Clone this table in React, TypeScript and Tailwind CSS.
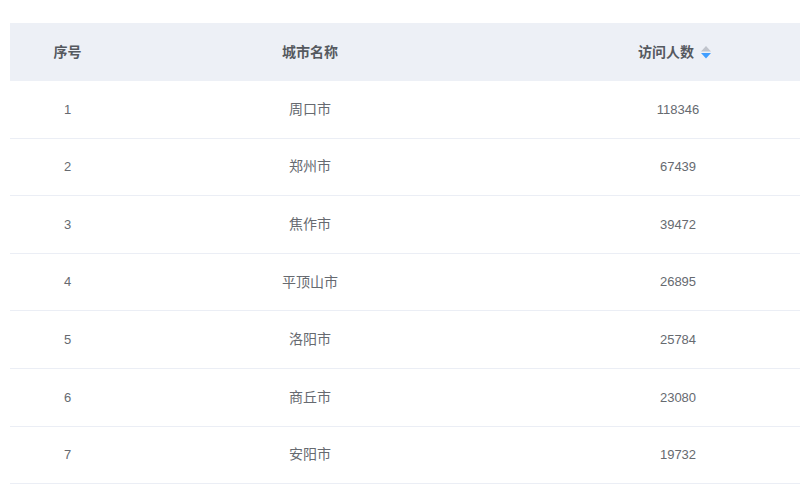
import React from 'react'

const rows = [
  { id: 1, city: '周口市', visits: 118346 },
  { id: 2, city: '郑州市', visits: 67439 },
  { id: 3, city: '焦作市', visits: 39472 },
  { id: 4, city: '平顶山市', visits: 26895 },
  { id: 5, city: '洛阳市', visits: 25784 },
  { id: 6, city: '商丘市', visits: 23080 },
  { id: 7, city: '安阳市', visits: 19732 },
]

// 排序图标：上灰下蓝
function SortIcon() {
  return (
    <span className="inline-flex w-[24px] h-[14px] items-center">
      <svg width="24" height="14" viewBox="0 0 24 14">
        <path d="M12 1 L17 6.5 L7 6.5 Z" fill="#c0c4cc" />
        <path d="M7 8 L17 8 L12 13.5 Z" fill="#409eff" />
      </svg>
    </span>
  )
}

export default function App() {
  return (
    <div
      className="w-[800px] h-[486px] overflow-hidden bg-white pl-[10px] pt-[23px]"
      style={{ fontFamily: '"Liberation Sans", "Noto Sans CJK SC", sans-serif' }}
    >
      <div className="w-[851px]">
        {/* 表头 */}
        <div className="flex h-[58px] items-center bg-[#edf0f6] text-[14px] font-bold text-[#55595f]">
          <div className="w-[115px] text-center">序号</div>
          <div className="w-[370px] text-center">城市名称</div>
          <div className="w-[366px] flex items-center justify-center">
            访问人数
            <SortIcon />
          </div>
        </div>
        {/* 数据行 */}
        {rows.map((r) => (
          <div
            key={r.id}
            className="flex h-[57.6px] items-center border-b border-[#ebeef5] text-[#666a70]"
          >
            <div className="w-[115px] text-center text-[13px]">{r.id}</div>
            <div className="w-[370px] text-center text-[14px]">{r.city}</div>
            <div className="w-[366px] text-center text-[13px]">{r.visits}</div>
          </div>
        ))}
      </div>
    </div>
  )
}
